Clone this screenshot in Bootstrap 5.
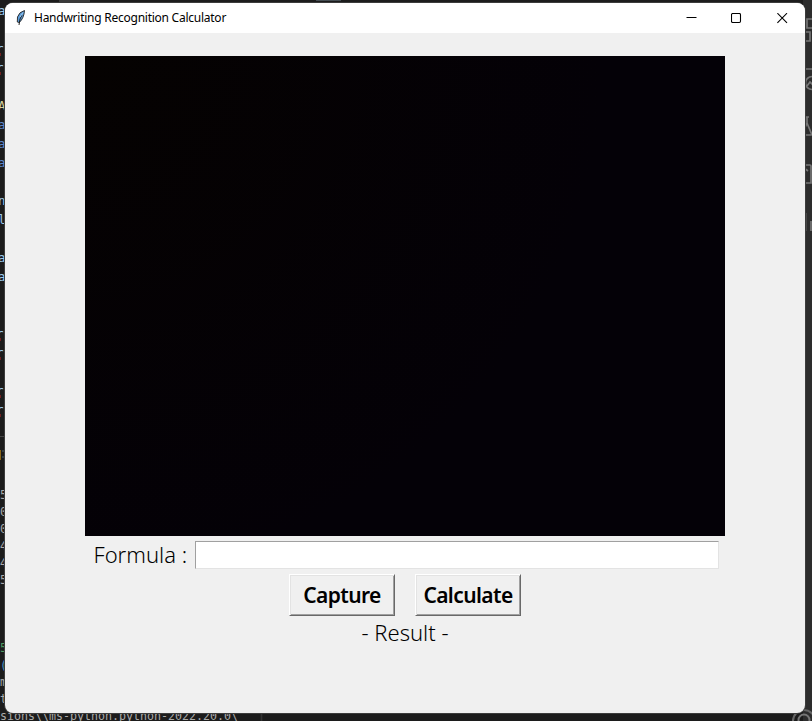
<!DOCTYPE html>
<html lang="en">
<head>
<meta charset="utf-8">
<meta name="viewport" content="width=device-width, initial-scale=1">
<title>Handwriting Recognition Calculator</title>
<link href="https://cdn.jsdelivr.net/npm/bootstrap@5.3.0/dist/css/bootstrap.min.css" rel="stylesheet">
<style>
html, body { height: 100%; }
body { background: #1c1c1c; font-family: "Noto Sans", "Noto Sans CJK KR", sans-serif; color: #000; }
.desk { width: 812px; height: 721px; padding: 3px 7px 8px 5px; }
.editor-text { left: 0; margin: 0; overflow: hidden; font-family: "DejaVu Sans Mono", monospace; color: #9cc8e8; }
.source { top: 1px; width: 6px; font-size: 12.5px; line-height: 19px; }
.source span { margin-left: -2px; }
.source .arm { margin-left: -4px; }
.console { top: 487px; width: 300px; height: 234px; font-size: 11.63px; line-height: 17px; color: #aaa; }
.c-blue { color: #5d86c8; } .c-yellow { color: #d5cf9c; } .c-green { color: #4f9a61; } .c-cyan { color: #4790c5; }
.pane-line { top: 436px; left: 0; width: 6px; height: 1px; background: #444; }
.tab-top { left: 59px; top: 0; width: 31px; height: 2px; background: #3a3a3a; }
.code-top { left: 316px; top: 0; width: 25px; height: 1px; background: #454d52; }
.strip { left: 803px; top: 0; width: 9px; height: 721px; background: #2d2d2d; }
.app-window { width: 800px; height: 710px; background: #f0f0f0; border-radius: 8px; overflow: hidden; box-shadow: 0 0 0 1px #3c3c3c; }
.title-row { height: 30px; background: #fff; padding-left: 9px; }
.title-text { font-size: 12px; line-height: 30px; margin-left: 6px; white-space: nowrap; letter-spacing: -.25px; }
.ctl { width: 45.5px; height: 30px; }
.camera { width: 640px; height: 480px; margin-top: 23px; background: radial-gradient(circle at 0 0, #050201, #040107 65%); }
.form-row { width: 625px; margin-top: 5px; margin-left: 2px; height: 28px; }
.label-text { font-size: 22px; line-height: 28px; font-weight: 300; white-space: pre; }
.formula-label { width: 101px; line-height: 27px; }
.entry { width: 524px; height: 28px; border: 1px solid; border-color: #a0a0a0 #e3e3e3 #e3e3e3 #a0a0a0; border-radius: 0; padding: 0 4px; background: #fff; font-size: 20px; }
.entry:focus { outline: none; }
.button-row { gap: 20px; margin-top: 5px; }
.tk-btn { width: 106px; height: 42px; padding: 0; border: 1px solid; border-color: #fff #696969 #696969 #fff; box-shadow: inset 1px 1px #e3e3e3, inset -1px -1px #a0a0a0; background: #f0f0f0; color: #000; font-size: 21px; line-height: 38px; font-weight: 600; letter-spacing: -.6px; white-space: nowrap; }
.result { margin-top: 2px; }
</style>
</head>
<body class="overflow-hidden">
<div class="desk position-relative overflow-hidden">
<pre class="editor-text source position-absolute"><span>a</span>

<span class="arm">r</span>
<span class="arm">r</span>

<span class="c-yellow">A</span>
<span class="c-blue">a</span>
<span class="c-blue">a</span>
<span class="c-blue">a</span>

<span>n</span>
<span>l</span>

<span>a</span>
<span>a</span>


<span class="arm">r</span>
<span class="arm">r</span>

<span class="arm">r</span>
<span class="arm">r</span></pre>
<div class="pane-line position-absolute"></div>
<svg class="position-absolute start-0 top-0" width="6" height="470" fill="none"><path d="M0 450h1v10H0z" fill="#8a6517"/><path d="M2 451h3M2 457h3" stroke="#4c6568"/><path d="M0 53v3M0 72v3M0 338v3M0 357v3M0 395v3M0 414v3" stroke="#732020" stroke-width="2"/></svg>
<pre class="editor-text console position-absolute">5
0
0
4
4
5



<span class="c-green">5</span>
<span class="c-cyan">(</span>
m
t
sions\\ms-python.python-2022.20.0\</pre>
<div class="tab-top position-absolute"></div>
<div class="code-top position-absolute"></div>
<div class="strip position-absolute"></div>
<svg class="position-absolute start-0 top-0" width="812" height="721" fill="none" stroke="#777" stroke-width="1.700">
<path d="M813 19h-6v9h6M804 32h6v9h-6M804 69h8"/>
<circle cx="812" cy="83" r="6.5"/><path d="M807 86l3-4 3 3M804 117h5M807 117v6l-4 9M807 123l5 12h-9M803 165h7q1 0 1 1v17h-8M804 168l4 3M805.500 213v18M811 221v10"/>
<path d="M261.500 713v8" stroke="#333"/><circle cx="804" cy="721" r="11" stroke="#666" stroke-width="2"/><circle cx="804" cy="720" r="5.500" stroke="#777" stroke-width="2"/>
</svg>
<main class="app-window position-relative d-flex flex-column align-items-center">
<header class="title-row w-100 d-flex align-items-center flex-shrink-0">
<svg width="14" height="18" viewBox="0 0 14 18" class="flex-shrink-0"><path d="M10.500 1.500Q5 3 3.500 8L3.300 13l2 .5Q10 9 10.500 1.500z" fill="#5b9bd8" stroke="#222" stroke-width=".9"/><path d="M8 6Q5.500 9 5 16" fill="none" stroke="#111" stroke-width=".9"/><path d="M9 3.500L6 8" stroke="#9dcbf1"/></svg>
<span class="title-text me-auto">Handwriting Recognition Calculator</span>
<div class="ctl d-flex align-items-center justify-content-center"><svg width="11" height="11"><path d="M.5 4.500h10" stroke="#000"/></svg></div>
<div class="ctl d-flex align-items-center justify-content-center"><svg width="11" height="11"><rect x=".5" y=".5" width="9" height="9" rx="1.200" fill="none" stroke="#000" stroke-width="1.100"/></svg></div>
<div class="ctl d-flex align-items-center justify-content-center"><svg width="11" height="11"><path d="M.4.200l9.600 9.600M10 .2L.4 9.800" stroke="#000" stroke-width="1.100"/></svg></div>
</header>
<div class="camera flex-shrink-0"></div>
<div class="form-row d-flex">
<label for="formula" class="formula-label label-text">Formula : </label>
<input id="formula" class="entry" type="text" aria-label="Formula">
</div>
<div class="button-row d-flex">
<button class="btn tk-btn rounded-0" type="button">Capture</button>
<button class="btn tk-btn rounded-0" type="button">Calculate</button>
</div>
<div class="result label-text">- Result -</div>
</main>
</div>
<script src="https://cdn.jsdelivr.net/npm/bootstrap@5.3.0/dist/js/bootstrap.bundle.min.js"></script>
</body>
</html>
